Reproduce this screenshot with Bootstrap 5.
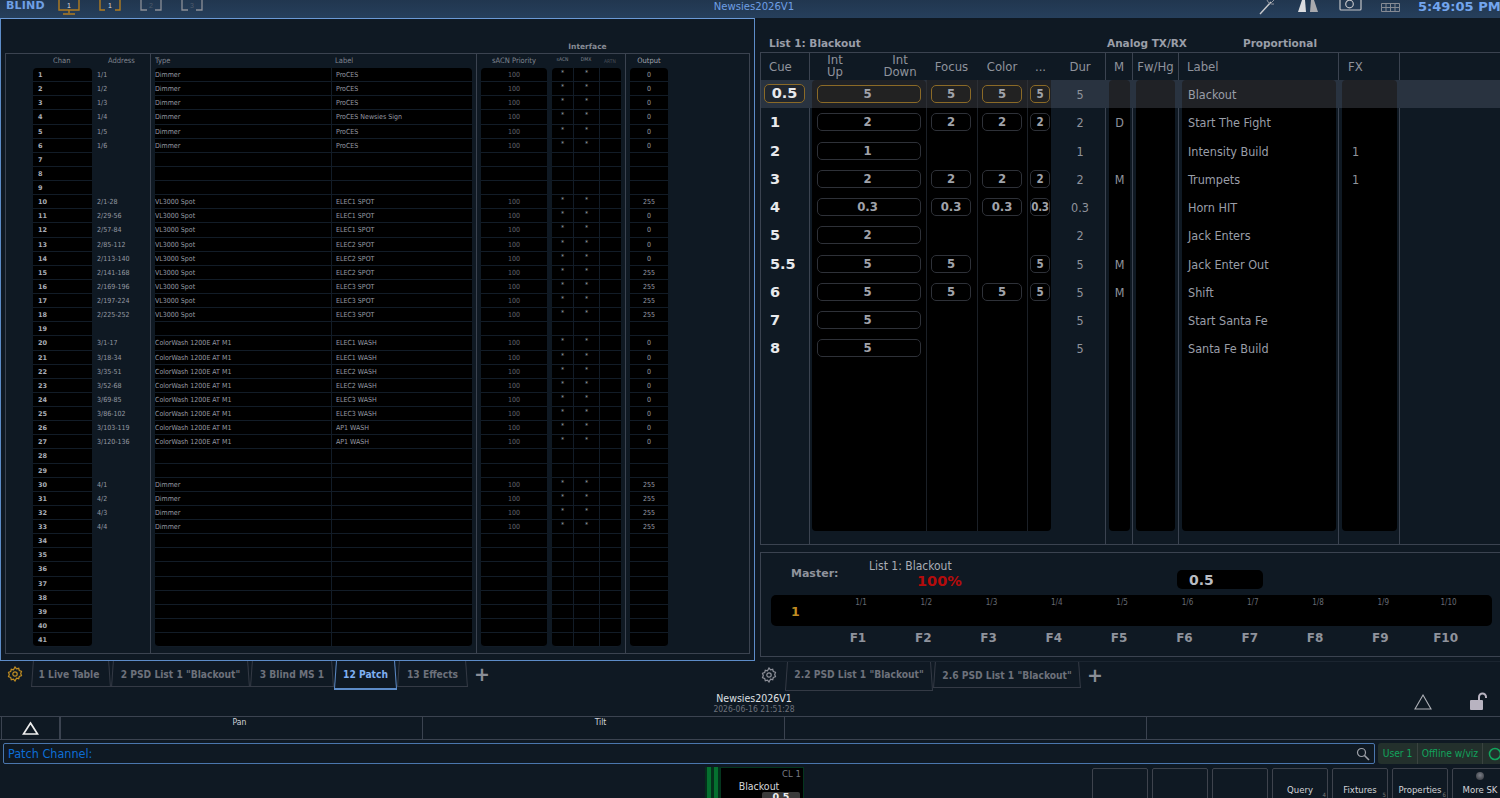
<!doctype html>
<html lang="en">
<head>
<meta charset="utf-8">
<title>Newsies2026V1</title>
<link href="https://cdn.jsdelivr.net/npm/bootstrap@5.3.0/dist/css/bootstrap.min.css" rel="stylesheet">
<style>
html,body{height:798px;overflow:hidden}
body{background:#0f1923;color:#a9adb6;font-family:"DejaVu Sans Condensed","Liberation Sans",sans-serif;font-size:13px;width:1500px}
.vb{font-family:"DejaVu Sans",sans-serif;font-weight:700}
.cb{font-family:"DejaVu Sans Condensed","DejaVu Sans",sans-serif;font-weight:700}
.topbar{height:18px;background:linear-gradient(#21364f,#263f5c);color:#6f9fe4;overflow:hidden}
.brand{font-size:11px;width:57px;padding-left:6px;line-height:11px;letter-spacing:.2px}
.topicons{gap:17px}
.topttl{left:0;right:0;top:-1px;font-size:11.2px;text-align:center;padding-left:8px}
.clock{font-size:13px;width:86px;line-height:13px;color:#72a5ee;padding-left:4px;white-space:nowrap}
.mainarea{height:643px}
.leftpane{width:755px;border:1px solid #5d8cc8;border-top-color:#6b9ad6;padding:34px 4px 6px 4px}
.rightpane{width:745px;padding:17px 0 0 5px;overflow:hidden}
.ifhead{height:0;font-size:7.5px;font-weight:700;text-align:center;padding-left:547px;width:618px;line-height:0;transform:translateY(-6px);color:#878b95;font-family:"DejaVu Sans",sans-serif}
.pframe{border:1px solid #3b4350;height:601px;width:745px;background-image:linear-gradient(#3b4350,#3b4350),linear-gradient(#3b4350,#3b4350),linear-gradient(#3b4350,#3b4350);background-repeat:no-repeat;background-size:1px 100%;background-position:144px 0,470px 0,619px 0}
.pgrid{display:grid;grid-template-columns:27px 59px 58px 5px 176px 141px 9px 66px 5px 21px 26px 22px 9px 38px;height:14.125px;font-size:7px;line-height:14px;color:#969aa4}
.phead{height:14px;color:#7f848e;font-size:7.5px;line-height:14px}
.pgrid>span{grid-row:1;white-space:nowrap;overflow:hidden}
.pgrid>span:nth-child(1){grid-column:2;padding-left:5px;font-weight:700;background:#000;color:#a9adb6;font-family:"DejaVu Sans",sans-serif;font-size:6.5px}
.pgrid>span:nth-child(2){grid-column:3;padding-left:5px}
.pgrid>span:nth-child(3){grid-column:5;background:#000}
.pgrid>span:nth-child(4){grid-column:6;background:#000;border-left:1px solid #121c27;padding-left:4px}
.pgrid>span:nth-child(5){grid-column:8;background:#000;text-align:center;color:#60656e}
.pgrid>span:nth-child(6){grid-column:10;background:#000;text-align:center;line-height:11px}
.pgrid>span:nth-child(7){grid-column:11;background:#000;text-align:center;line-height:11px;border-left:1px solid #121c27}
.pgrid>span:nth-child(8){grid-column:12;background:#000;text-align:center;border-left:1px solid #121c27}
.pgrid>span:nth-child(9){grid-column:14;background:#000;text-align:center}
.pbody .pgrid>span:not(:nth-child(2)){border-bottom:1px solid #121c27}
.pbody .pgrid:first-child>span:nth-child(1),.pbody .pgrid:first-child>span:nth-child(3),.pbody .pgrid:first-child>span:nth-child(5),.pbody .pgrid:first-child>span:nth-child(6),.pbody .pgrid:first-child>span:nth-child(9){border-top-left-radius:4px}
.pbody .pgrid:first-child>span:nth-child(1),.pbody .pgrid:first-child>span:nth-child(4),.pbody .pgrid:first-child>span:nth-child(5),.pbody .pgrid:first-child>span:nth-child(8),.pbody .pgrid:first-child>span:nth-child(9){border-top-right-radius:4px}
.pbody .pgrid:last-child>span:nth-child(1),.pbody .pgrid:last-child>span:nth-child(3),.pbody .pgrid:last-child>span:nth-child(5),.pbody .pgrid:last-child>span:nth-child(6),.pbody .pgrid:last-child>span:nth-child(9){border-bottom-left-radius:4px}
.pbody .pgrid:last-child>span:nth-child(1),.pbody .pgrid:last-child>span:nth-child(4),.pbody .pgrid:last-child>span:nth-child(5),.pbody .pgrid:last-child>span:nth-child(8),.pbody .pgrid:last-child>span:nth-child(9){border-bottom-right-radius:4px}
.phead>span{background:none!important;border:0!important;color:#7f848e!important;font-weight:400!important;font-family:"DejaVu Sans Condensed",sans-serif!important;font-size:7.5px!important}
.phead>span:nth-child(1){padding-left:20px!important}
.phead>span:nth-child(2){padding-left:16px!important}
.phead>span:nth-child(6),.phead>span:nth-child(7),.phead>span:nth-child(8){font-size:5px!important}
.phead>span:nth-child(8){color:#4a4f58!important}
.phead>span:nth-child(9){color:#a0a4ad!important;overflow:visible}
.listttl{height:17px;font-size:10.5px;line-height:17px;color:#9a9ea8}
.listttl>span:nth-child(1){width:347px;padding-left:9px}
.listttl>span:nth-child(2){width:136px}
.cueframe{height:493px;border-top:1px solid #3b4350;border-bottom:1px solid #3b4350;border-left:1px solid #3b4350;background-image:linear-gradient(#3b4350,#3b4350),linear-gradient(#3b4350,#3b4350),linear-gradient(#3b4350,#3b4350),linear-gradient(#3b4350,#3b4350),linear-gradient(#3b4350,#3b4350),linear-gradient(#3b4350,#3b4350);background-repeat:no-repeat;background-size:1px 100%;background-position:48px 0,344px 0,371px 0,417px 0,577px 0,638px 0}
.cgrid{display:grid;grid-template-columns:48px 3px 114px 51px 50px 24px 54px 4px 21px 6px 39px 7px 154px 6px 55px 1fr;height:28.25px;line-height:29px;font-size:12.5px;color:#8f939c}
.cgrid>span{grid-row:1;white-space:nowrap;text-align:center}
.cgrid>span:nth-child(1){grid-column:1;color:#e8e9ec;font-family:"DejaVu Sans",sans-serif;font-weight:700;font-size:14.5px;text-align:left;padding-left:9px}
.cgrid>span:nth-child(2){grid-column:3;background:#000}
.cgrid>span:nth-child(3){grid-column:4;background:#000;border-left:1px solid #1b2027}
.cgrid>span:nth-child(4){grid-column:5;background:#000;border-left:1px solid #1b2027}
.cgrid>span:nth-child(5){grid-column:6;background:#000;border-left:1px solid #1b2027}
.cgrid>span:nth-child(6){grid-column:7;padding-left:4px}
.cgrid>span:nth-child(7){grid-column:9;background:#000}
.cgrid>span:nth-child(8){grid-column:11;background:#000}
.cgrid>span:nth-child(9){grid-column:13;background:#000;text-align:left;padding-left:6px;color:#9a9ea8}
.cgrid>span:nth-child(10){grid-column:15;background:#000;text-align:left;padding-left:10px}
.chead{height:27px;line-height:27px;font-size:13px;color:#8f939c}
.chead>span{background:none!important;border:0!important;color:#8f939c!important;font-weight:400!important;font-family:"DejaVu Sans Condensed",sans-serif!important;font-size:13px!important}
.chead>span:nth-child(1){padding-left:8px!important}
.chead>span:nth-child(2){display:flex;line-height:12px;padding-top:1px}
.chead i{font-style:normal;width:46px;display:block;text-align:center}
.chead i+i{margin-left:19px}
.chead>span:nth-child(5){padding-left:3px}
.chead>span:nth-child(7){margin-left:-4px;margin-right:-3px}
.chead>span:nth-child(8){margin:0 -4px}
.chead>span:nth-child(9){padding-left:5px!important}
.chead>span:nth-child(10){padding-left:6px!important}
.cueon{background:#293340}
.cueon>span:not(:nth-child(1)):not(:nth-child(6)){background:#202226}
.cueon>span:nth-child(2),.cueon>span:nth-child(3),.cueon>span:nth-child(4),.cueon>span:nth-child(5){border-left-color:#2c2f35}
.chead+.cueon>span:nth-child(n+7),.chead+.cueon>span:nth-child(2){border-top-left-radius:4px;border-top-right-radius:4px}
.pill{display:block;height:18px;line-height:16px;margin-top:5px;border:1px solid #2e3138;border-radius:5px;font-family:"DejaVu Sans Condensed",sans-serif;font-weight:700;font-size:13px;color:#a0a3aa}
.cueon .pill{border-color:#8b6a27;background:#222}
.pa{margin:5px 5px 0 5px;padding-right:3px}.pb{margin:5px 6px 0 4px}.pc{margin:5px 5px 0 4px}.pd{margin:5px 1px 0 2px;font-size:11.5px;letter-spacing:-.3px}
.pcue{display:block;width:41px;height:19px;margin:4px 0 0 -6px;line-height:16px;border:1px solid #8b6a27;border-radius:5px;text-align:center;background:#20262e}
.cfill{height:168px}
.cfill>span:not(:nth-child(1)):not(:nth-child(6)){background:#000}
.cfill>span:nth-child(2),.cfill>span:nth-child(5),.cfill>span:nth-child(7),.cfill>span:nth-child(8),.cfill>span:nth-child(9),.cfill>span:nth-child(10){border-radius:0 0 4px 4px}
.cfill>span:nth-child(2){border-bottom-right-radius:0}
.cfill>span:nth-child(5){border-bottom-left-radius:0}
.masterbox{height:105px;margin-top:7px;border:1px solid #3b4350;border-right:0;position:relative;padding:0 8px 0 10px}
.mtop{height:42px}
.mlbl{width:98px;padding:13px 0 0 20px;font-size:11px;line-height:16px;color:#8f939c}
.mname{width:308px;padding-top:6px;line-height:14px;font-size:12px}
.mpct{display:block;font-family:"DejaVu Sans",sans-serif;font-weight:700;font-size:14.5px;line-height:14px;color:#b40c0c;padding-left:48px;margin-top:1px}
.mval{width:86px;height:19px;background:#000;border-radius:5px;margin-top:17px;font-size:14px;line-height:20px;font-family:"DejaVu Sans",sans-serif;font-weight:700;padding-left:12px;color:#b9bcc3}
.fstrip{height:31px;background:#000;border-radius:5px;display:grid;grid-template-columns:repeat(11,65.3px);font-size:8px;color:#666b74;text-align:center;line-height:16px;width:721px}
.fstrip>b{font-size:12.5px;line-height:34px;color:#c08d22;text-align:left;padding-left:20px;font-family:"DejaVu Sans",sans-serif;width:54px}
.fstrip>span{transform:translateX(-8px)}
.fkeys{display:grid;grid-template-columns:repeat(11,65.3px);font-size:12px;text-align:center;line-height:24px;width:721px;color:#8f939c}
.fkeys>span{transform:translateX(-11px)}
.tabsrow{height:29px;font-size:10.2px;color:#6d717b}
.ltabs{width:760px}
.rtabs{flex:1;border-top:1px solid #1b2530}
.tabitem{position:relative;height:26px;line-height:28px;text-align:center;white-space:nowrap;border-bottom:1px solid #343a45}
.tabitem::before,.tabitem::after{content:"";position:absolute;top:0;bottom:0;width:1px;background:#343a45}
.tabitem::before{left:1px;transform:skewX(-4deg)}
.tabitem::after{right:1px;transform:skewX(4deg)}
.t1{width:80px;padding-right:4px}.t2{width:139px}.t3{width:84px}.t4{width:63px;height:29px;color:#7fb0f2;border-bottom:2px solid #5d8cc8;line-height:27px}.t5{width:71px}
.t4::before,.t4::after{background:#5d8cc8}
.ta{width:148px;height:29px;line-height:26px}.tb{width:148px}
.gearbox{width:31px;height:26px;padding-right:2px}
.rgear{width:25px;height:26px;padding-left:1px}
.plus{font-size:19px;line-height:27px;width:28px;text-align:center;font-weight:700;color:#8a8e97;font-family:"DejaVu Sans",sans-serif}
.inforow{height:26px;color:#dfe0e3;position:relative}
.infomid{width:1500px;text-align:center;font-size:10.5px;line-height:11px;padding:3px 0 0 8px}
.infomid small{display:block;font-size:8.5px;color:#6d717b}
.lockbox{right:12px;top:1px;gap:35px}
.encrow{height:24px;border-top:1px solid #3b4350;border-bottom:1px solid #3b4350;font-size:8.5px;color:#d3d4d8;line-height:11px;padding-left:1px}
.enc{border-right:1px solid #3b4350;text-align:center;height:100%;padding-right:4px}
.e0{width:60px;border-left:1px solid #3b4350;border-right-width:2px;padding:0}.e1{width:362px}.e2{width:362px;padding-right:6px}.e3{width:362px}.e4{flex:1;border:0}
.cmdrow{height:26px;padding:3px 0 2px 3px}
.cmdline{width:1372px;height:21px;border:1px solid #4a76ad;line-height:19px;font-size:12.5px;color:#0d6ed6;padding:0 4px;border-radius:2px}
.stat{flex:1;margin-left:3px;background:#23302c;border-radius:3px 0 0 3px;color:#12a35c;font-size:10.2px;line-height:21px;white-space:nowrap;overflow:hidden}
.stat>span{border-right:1px solid #3a4340;height:21px;flex:none;text-align:center}
.st1{width:40px}.st2{width:65px}
.stat>svg{flex:none;margin:4px 0 0 5px}
.softrow{height:32px}
.pbtile{margin:1px 0 0 705px;width:99px;height:31px;background:#04301b}
.gbar{background:#05702f;height:31px}
.gb1{width:4px;margin:0 3px 0 2px}.gb2{width:4px;margin-right:2px}
.tilebody{width:84px;background:#000;border:1px solid #04351d;border-bottom:0;height:31px;font-size:9.5px;line-height:10px;text-align:right;padding:1px 2px 0 0;overflow:hidden;color:#777b84}
.tilebody em{display:block;font-style:normal;color:#d4d5d9;text-align:center;font-size:10.5px;line-height:12px;margin-top:1px;padding-right:4px}
.tilebody b{display:block;margin:0 1px 0 41px;background:#3a3a3a;text-align:center;color:#eee;border-radius:2px 2px 0 0;line-height:9px;height:9px;font-family:"DejaVu Sans",sans-serif;font-size:9.5px}
.softkeys{margin:2px 0 0 288px;gap:4px;width:420px}
.sk{position:relative;flex:0 0 56px;height:32px;border:1px solid #3e434d;border-radius:2px 2px 0 0;text-align:center;font-size:9.5px;line-height:10px;padding-top:16px;color:#d3d4d8;white-space:nowrap}
.sk sub{position:absolute;right:1px;top:23px;font-size:6px;line-height:6px;color:#777}
.skdot{position:absolute;left:23px;top:3px;width:8px;height:8px;border-radius:50%;background:radial-gradient(circle at 50% 40%,#7b7f88,#2d3036)}
</style>
</head>
<body>
<header class="topbar d-flex position-relative">
  <span class="vb brand">BLIND</span>
  <div class="d-flex topicons">
    <svg width="24" height="18" viewBox="0 0 24 18"><path d="M2 0v10h20V0M12 10v3M6 14h12" fill="none" stroke="#b17c20" stroke-width="1.4"/><text x="12" y="8" font-size="7" fill="#ddd" text-anchor="middle" font-family="Liberation Sans">1</text></svg>
    <svg width="24" height="18" viewBox="0 0 24 18"><path d="M2 0v10h5M17 10h5V0" fill="none" stroke="#b17c20" stroke-width="1.4"/><text x="12" y="8" font-size="7" fill="#ddd" text-anchor="middle" font-family="Liberation Sans">1</text></svg>
    <svg width="24" height="18" viewBox="0 0 24 18"><path d="M2 0v10h6M16 10h6V0" fill="none" stroke="#8b8f97" stroke-width="1.3"/><text x="12" y="8" font-size="7" fill="#4d5a6b" text-anchor="middle" font-family="Liberation Sans">2</text></svg>
    <svg width="24" height="18" viewBox="0 0 24 18"><path d="M2 0v10h6M16 10h6V0" fill="none" stroke="#8b8f97" stroke-width="1.3"/><text x="12" y="8" font-size="7" fill="#4d5a6b" text-anchor="middle" font-family="Liberation Sans">3</text></svg>
  </div>
  <div class="position-absolute topttl">Newsies2026V1</div>
  <div class="ms-auto d-flex">
    <svg width="168" height="18" viewBox="0 0 168 18"><path d="M14 14 L25 2" stroke="#c8c9cc" stroke-width="1.4" fill="none"/><path d="M21 0 A6 6 0 0 0 28 4 M28 0l-4 4" stroke="#8f939c" fill="none"/><path d="M52 12l4-12h3l1 12z" fill="#dcdde0"/><path d="M64 12l1-12h3l4 12z" fill="#a8a9ad"/><path d="M94 0v9a1 1 0 0 0 1 1h19a1 1 0 0 0 1-1V0" stroke="#c2c3c7" stroke-width="1.2" fill="none"/><circle cx="103.500" cy="4" r="3.800" stroke="#c2c3c7" stroke-width="1.200" fill="none"/><g fill="none" stroke="#868b94" stroke-width="1"><path d="M135.500 3.500h18v4h-18zM135.500 7.500h18v4h-18zM140 3.500v8M144.500 3.500v8M149 3.500v8"/></g></svg>
    <span class="vb clock">5:49:05 PM</span>
  </div>
</header>

<main class="d-flex mainarea">
  <section class="leftpane">
    <div class="ifhead">Interface</div>
    <div class="pframe">
      <div class="pgrid phead"><span>Chan</span><span>Address</span><span>Type</span><span>Label</span><span>sACN Priority</span><span>sACN</span><span>DMX</span><span>ARTN</span><span>Output</span></div>
      <div class="pbody">
<div class="pgrid"><span>1</span><span>1/1</span><span>Dimmer</span><span>ProCES</span><span>100</span><span>*</span><span>*</span><span></span><span>0</span></div>
<div class="pgrid"><span>2</span><span>1/2</span><span>Dimmer</span><span>ProCES</span><span>100</span><span>*</span><span>*</span><span></span><span>0</span></div>
<div class="pgrid"><span>3</span><span>1/3</span><span>Dimmer</span><span>ProCES</span><span>100</span><span>*</span><span>*</span><span></span><span>0</span></div>
<div class="pgrid"><span>4</span><span>1/4</span><span>Dimmer</span><span>ProCES Newsies Sign</span><span>100</span><span>*</span><span>*</span><span></span><span>0</span></div>
<div class="pgrid"><span>5</span><span>1/5</span><span>Dimmer</span><span>ProCES</span><span>100</span><span>*</span><span>*</span><span></span><span>0</span></div>
<div class="pgrid"><span>6</span><span>1/6</span><span>Dimmer</span><span>ProCES</span><span>100</span><span>*</span><span>*</span><span></span><span>0</span></div>
<div class="pgrid"><span>7</span><span></span><span></span><span></span><span></span><span></span><span></span><span></span><span></span></div>
<div class="pgrid"><span>8</span><span></span><span></span><span></span><span></span><span></span><span></span><span></span><span></span></div>
<div class="pgrid"><span>9</span><span></span><span></span><span></span><span></span><span></span><span></span><span></span><span></span></div>
<div class="pgrid"><span>10</span><span>2/1-28</span><span>VL3000 Spot</span><span>ELEC1 SPOT</span><span>100</span><span>*</span><span>*</span><span></span><span>255</span></div>
<div class="pgrid"><span>11</span><span>2/29-56</span><span>VL3000 Spot</span><span>ELEC1 SPOT</span><span>100</span><span>*</span><span>*</span><span></span><span>0</span></div>
<div class="pgrid"><span>12</span><span>2/57-84</span><span>VL3000 Spot</span><span>ELEC1 SPOT</span><span>100</span><span>*</span><span>*</span><span></span><span>0</span></div>
<div class="pgrid"><span>13</span><span>2/85-112</span><span>VL3000 Spot</span><span>ELEC2 SPOT</span><span>100</span><span>*</span><span>*</span><span></span><span>0</span></div>
<div class="pgrid"><span>14</span><span>2/113-140</span><span>VL3000 Spot</span><span>ELEC2 SPOT</span><span>100</span><span>*</span><span>*</span><span></span><span>0</span></div>
<div class="pgrid"><span>15</span><span>2/141-168</span><span>VL3000 Spot</span><span>ELEC2 SPOT</span><span>100</span><span>*</span><span>*</span><span></span><span>255</span></div>
<div class="pgrid"><span>16</span><span>2/169-196</span><span>VL3000 Spot</span><span>ELEC3 SPOT</span><span>100</span><span>*</span><span>*</span><span></span><span>255</span></div>
<div class="pgrid"><span>17</span><span>2/197-224</span><span>VL3000 Spot</span><span>ELEC3 SPOT</span><span>100</span><span>*</span><span>*</span><span></span><span>255</span></div>
<div class="pgrid"><span>18</span><span>2/225-252</span><span>VL3000 Spot</span><span>ELEC3 SPOT</span><span>100</span><span>*</span><span>*</span><span></span><span>255</span></div>
<div class="pgrid"><span>19</span><span></span><span></span><span></span><span></span><span></span><span></span><span></span><span></span></div>
<div class="pgrid"><span>20</span><span>3/1-17</span><span>ColorWash 1200E AT M1</span><span>ELEC1 WASH</span><span>100</span><span>*</span><span>*</span><span></span><span>0</span></div>
<div class="pgrid"><span>21</span><span>3/18-34</span><span>ColorWash 1200E AT M1</span><span>ELEC1 WASH</span><span>100</span><span>*</span><span>*</span><span></span><span>0</span></div>
<div class="pgrid"><span>22</span><span>3/35-51</span><span>ColorWash 1200E AT M1</span><span>ELEC2 WASH</span><span>100</span><span>*</span><span>*</span><span></span><span>0</span></div>
<div class="pgrid"><span>23</span><span>3/52-68</span><span>ColorWash 1200E AT M1</span><span>ELEC2 WASH</span><span>100</span><span>*</span><span>*</span><span></span><span>0</span></div>
<div class="pgrid"><span>24</span><span>3/69-85</span><span>ColorWash 1200E AT M1</span><span>ELEC3 WASH</span><span>100</span><span>*</span><span>*</span><span></span><span>0</span></div>
<div class="pgrid"><span>25</span><span>3/86-102</span><span>ColorWash 1200E AT M1</span><span>ELEC3 WASH</span><span>100</span><span>*</span><span>*</span><span></span><span>0</span></div>
<div class="pgrid"><span>26</span><span>3/103-119</span><span>ColorWash 1200E AT M1</span><span>AP1 WASH</span><span>100</span><span>*</span><span>*</span><span></span><span>0</span></div>
<div class="pgrid"><span>27</span><span>3/120-136</span><span>ColorWash 1200E AT M1</span><span>AP1 WASH</span><span>100</span><span>*</span><span>*</span><span></span><span>0</span></div>
<div class="pgrid"><span>28</span><span></span><span></span><span></span><span></span><span></span><span></span><span></span><span></span></div>
<div class="pgrid"><span>29</span><span></span><span></span><span></span><span></span><span></span><span></span><span></span><span></span></div>
<div class="pgrid"><span>30</span><span>4/1</span><span>Dimmer</span><span></span><span>100</span><span>*</span><span>*</span><span></span><span>255</span></div>
<div class="pgrid"><span>31</span><span>4/2</span><span>Dimmer</span><span></span><span>100</span><span>*</span><span>*</span><span></span><span>255</span></div>
<div class="pgrid"><span>32</span><span>4/3</span><span>Dimmer</span><span></span><span>100</span><span>*</span><span>*</span><span></span><span>255</span></div>
<div class="pgrid"><span>33</span><span>4/4</span><span>Dimmer</span><span></span><span>100</span><span>*</span><span>*</span><span></span><span>255</span></div>
<div class="pgrid"><span>34</span><span></span><span></span><span></span><span></span><span></span><span></span><span></span><span></span></div>
<div class="pgrid"><span>35</span><span></span><span></span><span></span><span></span><span></span><span></span><span></span><span></span></div>
<div class="pgrid"><span>36</span><span></span><span></span><span></span><span></span><span></span><span></span><span></span><span></span></div>
<div class="pgrid"><span>37</span><span></span><span></span><span></span><span></span><span></span><span></span><span></span><span></span></div>
<div class="pgrid"><span>38</span><span></span><span></span><span></span><span></span><span></span><span></span><span></span><span></span></div>
<div class="pgrid"><span>39</span><span></span><span></span><span></span><span></span><span></span><span></span><span></span><span></span></div>
<div class="pgrid"><span>40</span><span></span><span></span><span></span><span></span><span></span><span></span><span></span><span></span></div>
<div class="pgrid"><span>41</span><span></span><span></span><span></span><span></span><span></span><span></span><span></span><span></span></div>
      </div>
    </div>
  </section>

  <section class="rightpane">
    <div class="d-flex vb listttl"><span>List 1: Blackout</span><span>Analog TX/RX</span><span>Proportional</span></div>
    <div class="cueframe">
      <div class="cgrid chead"><span>Cue</span><span><i>Int<br>Up</i><i>Int<br>Down</i></span><span>Focus</span><span>Color</span><span>...</span><span>Dur</span><span>M</span><span>Fw/Hg</span><span>Label</span><span>FX</span></div>
      <div class="cgrid cueon"><span><span class="pcue">0.5</span></span><span><b class="pill pa">5</b></span><span><b class="pill pb">5</b></span><span><b class="pill pc">5</b></span><span><b class="pill pd">5</b></span><span>5</span><span></span><span></span><span>Blackout</span><span></span></div>
      <div class="cgrid"><span>1</span><span><b class="pill pa">2</b></span><span><b class="pill pb">2</b></span><span><b class="pill pc">2</b></span><span><b class="pill pd">2</b></span><span>2</span><span>D</span><span></span><span>Start The Fight</span><span></span></div>
      <div class="cgrid"><span>2</span><span><b class="pill pa">1</b></span><span></span><span></span><span></span><span>1</span><span></span><span></span><span>Intensity Build</span><span>1</span></div>
      <div class="cgrid"><span>3</span><span><b class="pill pa">2</b></span><span><b class="pill pb">2</b></span><span><b class="pill pc">2</b></span><span><b class="pill pd">2</b></span><span>2</span><span>M</span><span></span><span>Trumpets</span><span>1</span></div>
      <div class="cgrid"><span>4</span><span><b class="pill pa">0.3</b></span><span><b class="pill pb">0.3</b></span><span><b class="pill pc">0.3</b></span><span><b class="pill pd">0.3</b></span><span>0.3</span><span></span><span></span><span>Horn HIT</span><span></span></div>
      <div class="cgrid"><span>5</span><span><b class="pill pa">2</b></span><span></span><span></span><span></span><span>2</span><span></span><span></span><span>Jack Enters</span><span></span></div>
      <div class="cgrid"><span>5.5</span><span><b class="pill pa">5</b></span><span><b class="pill pb">5</b></span><span></span><span><b class="pill pd">5</b></span><span>5</span><span>M</span><span></span><span>Jack Enter Out</span><span></span></div>
      <div class="cgrid"><span>6</span><span><b class="pill pa">5</b></span><span><b class="pill pb">5</b></span><span><b class="pill pc">5</b></span><span><b class="pill pd">5</b></span><span>5</span><span>M</span><span></span><span>Shift</span><span></span></div>
      <div class="cgrid"><span>7</span><span><b class="pill pa">5</b></span><span></span><span></span><span></span><span>5</span><span></span><span></span><span>Start Santa Fe</span><span></span></div>
      <div class="cgrid"><span>8</span><span><b class="pill pa">5</b></span><span></span><span></span><span></span><span>5</span><span></span><span></span><span>Santa Fe Build</span><span></span></div>
      <div class="cgrid cfill"><span></span><span></span><span></span><span></span><span></span><span></span><span></span><span></span><span></span><span></span></div>
    </div>
    <div class="masterbox">
      <div class="d-flex mtop">
        <div class="vb mlbl">Master:</div>
        <div class="mname">List 1: Blackout<span class="mpct">100%</span></div>
        <div class="mval">0.5</div>
      </div>
      <div class="fstrip"><b>1</b><span>1/1</span><span>1/2</span><span>1/3</span><span>1/4</span><span>1/5</span><span>1/6</span><span>1/7</span><span>1/8</span><span>1/9</span><span>1/10</span></div>
      <div class="fkeys vb"><i></i><span>F1</span><span>F2</span><span>F3</span><span>F4</span><span>F5</span><span>F6</span><span>F7</span><span>F8</span><span>F9</span><span>F10</span></div>
    </div>
  </section>
</main>

<nav class="d-flex tabsrow cb">
  <div class="d-flex ltabs">
    <div class="gearbox d-flex align-items-center justify-content-center"><svg width="16" height="16" viewBox="0 0 16 16"><path d="M8 1l1.500 1.800 2.200-.5.600 2.200 2.200.8-.8 2.200.8 2.200-2.200.8-.6 2.200-2.200-.5L8 15l-1.500-1.800-2.200.5-.6-2.200-2.200-.8.8-2.200-.8-2.200 2.200-.8.600-2.200 2.200.5z" fill="none" stroke="#c08d22" stroke-width="1.200"/><circle cx="8" cy="8" r="2.200" fill="none" stroke="#c08d22" stroke-width="1.200"/></svg></div>
    <div class="tabitem t1">1 Live Table</div>
    <div class="tabitem t2">2 PSD List 1 "Blackout"</div>
    <div class="tabitem t3">3 Blind MS 1</div>
    <div class="tabitem t4">12 Patch</div>
    <div class="tabitem t5">13 Effects</div>
    <div class="plus">+</div>
  </div>
  <div class="d-flex rtabs">
    <div class="rgear d-flex align-items-center"><svg width="16" height="16" viewBox="0 0 16 16"><path d="M8 1l1.500 1.800 2.200-.5.600 2.200 2.200.8-.8 2.200.8 2.200-2.200.8-.6 2.200-2.200-.5L8 15l-1.500-1.800-2.200.5-.6-2.200-2.200-.8.8-2.200-.8-2.200 2.200-.8.600-2.200 2.200.5z" fill="none" stroke="#8d9099" stroke-width="1.200"/><circle cx="8" cy="8" r="2.200" fill="none" stroke="#8d9099" stroke-width="1.200"/></svg></div>
    <div class="tabitem ta">2.2 PSD List 1 "Blackout"</div>
    <div class="tabitem tb">2.6 PSD List 1 "Blackout"</div>
    <div class="plus">+</div>
  </div>
</nav>

<div class="inforow">
  <div class="infomid">Newsies2026V1<small>2026-06-16 21:51:28</small></div>
  <div class="position-absolute d-flex lockbox">
    <svg width="20" height="20" viewBox="0 0 20 20"><path d="M10 4L18 18H2z" fill="none" stroke="#aeb0b6" stroke-width="1.100"/></svg>
    <svg width="20" height="20" viewBox="0 0 20 20"><rect x="2" y="9" width="13" height="10" rx="1" fill="#b8b3c0"/><path d="M11 9V6a3.500 3.500 0 0 1 7 0v1" fill="none" stroke="#b8b3c0" stroke-width="2"/></svg>
  </div>
</div>

<div class="d-flex encrow">
  <div class="enc e0 d-flex align-items-center justify-content-center"><svg width="17" height="15" viewBox="0 0 17 15"><path d="M8.500 2L15.500 13H1.500z" fill="none" stroke="#eee" stroke-width="1.700"/></svg></div>
  <div class="enc e1">Pan</div>
  <div class="enc e2">Tilt</div>
  <div class="enc e3"></div>
  <div class="enc e4"></div>
</div>

<div class="d-flex cmdrow">
  <div class="cmdline d-flex justify-content-between align-items-center"><span>Patch Channel:</span><svg width="14" height="14" viewBox="0 0 14 14"><circle cx="5.500" cy="5.500" r="4" fill="none" stroke="#9da0a8" stroke-width="1.200"/><path d="M8.500 8.500L13 13" stroke="#9da0a8" stroke-width="1.600"/></svg></div>
  <div class="stat d-flex"><span class="st1">User 1</span><span class="st2">Offline w/viz</span><svg width="14" height="14" viewBox="0 0 14 14"><circle cx="7" cy="7" r="5.500" fill="none" stroke="#12a35c" stroke-width="1.600"/></svg></div>
</div>

<footer class="d-flex softrow">
  <div class="d-flex pbtile">
    <div class="gbar gb1"></div><div class="gbar gb2"></div>
    <div class="tilebody">CL 1<em>Blackout</em><b>0.5</b></div>
  </div>
  <div class="d-flex softkeys">
    <div class="sk"></div><div class="sk"></div><div class="sk"></div>
    <div class="sk">Query<sub>4</sub></div><div class="sk">Fixtures<sub>5</sub></div><div class="sk">Properties<sub>6</sub></div><div class="sk"><i class="skdot"></i>More SK</div>
  </div>
</footer>
<script src="https://cdn.jsdelivr.net/npm/bootstrap@5.3.0/dist/js/bootstrap.bundle.min.js"></script>
</body>
</html>
